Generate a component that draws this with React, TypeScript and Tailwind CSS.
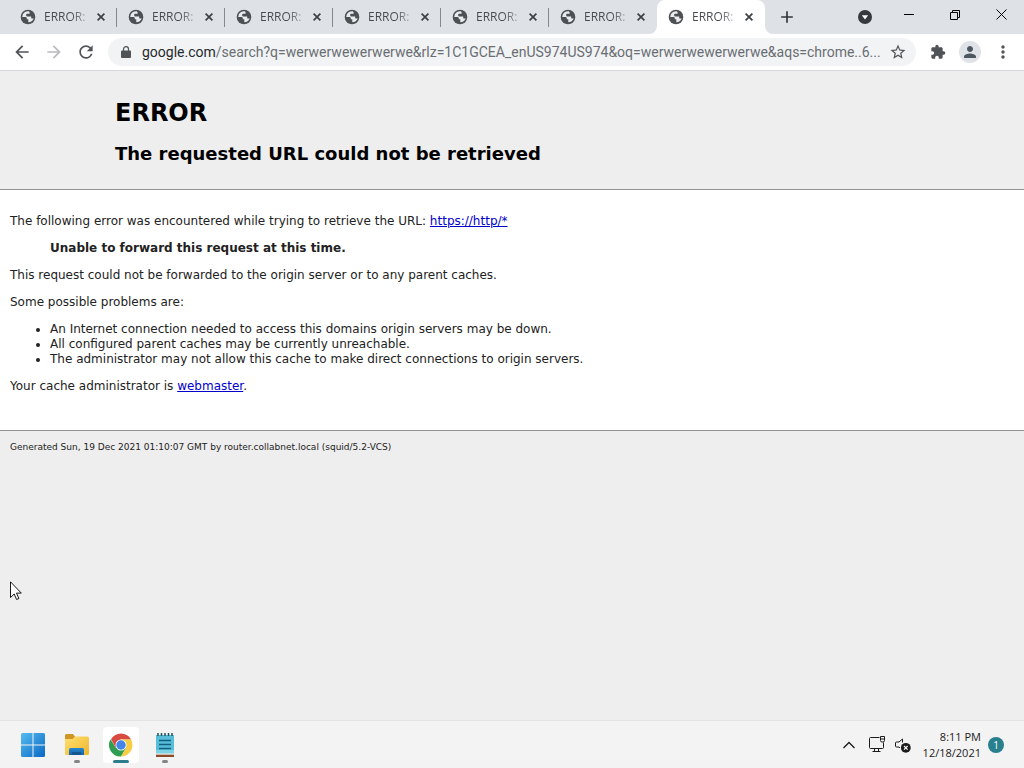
import React from 'react';
import {
  MdAdd,
  MdArrowBack,
  MdArrowForward,
  MdExtension,
  MdMoreVert,
  MdPerson,
  MdRefresh,
  MdStarBorder,
} from 'react-icons/md';

const tabs = [1, 2, 3, 4, 5, 6, 7];

function GlobeIcon() {
  return (
    <svg className="size-4 shrink-0" viewBox="0 0 16 16" aria-hidden="true">
      <circle cx="8" cy="8" r="7.300" fill="#4d5154" />
      <path
        d="M8.800 2.300C6.500 2 4 3.200 2.900 5.200L2.200 8h3.300c1 0 1.300.7 1.300 1.400v.9h1.500v2.900c2.500 0 4.600-1.500 5.400-3.800h-1.500c-.7 0-1-.4-1-1V7.600H7.600C6.700 7.600 6.100 7 6.100 6.100c0-.8.600-1.300 1.400-1.300h1.300c.6 0 1-.4 1-1z"
        fill="#e9ebee"
      />
    </svg>
  );
}

function Tab({ active }: { active: boolean }) {
  return (
    <div
      className={
        active
          ? 'relative flex h-full w-[108px] items-center rounded-t-lg bg-white pr-2 pl-[11px]'
          : 'relative flex h-full w-[108px] items-center pr-2 pl-[11px]'
      }
    >
      {active && (
        <>
          <svg className="absolute bottom-0 -left-2 size-2" viewBox="0 0 8 8" aria-hidden="true">
            <path d="M8 0v8H0a8 8 0 0 0 8-8z" fill="#fff" />
          </svg>
          <svg className="absolute -right-2 bottom-0 size-2" viewBox="0 0 8 8" aria-hidden="true">
            <path d="M0 0v8h8a8 8 0 0 1-8-8z" fill="#fff" />
          </svg>
        </>
      )}
      <GlobeIcon />
      <button className="ml-2 flex-1 bg-linear-to-r from-[#45494d] from-60% to-[#45494d]/20 bg-clip-text text-left text-xs whitespace-nowrap text-transparent">
        ERROR:
      </button>
      <button aria-label="Close tab" className="ml-1 flex size-4 shrink-0 items-center justify-center">
        <svg className="size-2" viewBox="0 0 8 8" stroke="#3c4043" strokeWidth="1.700">
          <path d="M.6.6l6.800 6.800M7.400.6L.6 7.400" />
        </svg>
      </button>
    </div>
  );
}

function TabStrip() {
  return (
    <div className="flex h-[34px] bg-[#dee1e6] pl-[9px]">
      {tabs.map((id, i) => (
        <div key={id} className="relative">
          <Tab active={i === tabs.length - 1} />
          {i < tabs.length - 2 && <span className="absolute top-2 right-0 h-[19px] w-px bg-[#85898e]" />}
        </div>
      ))}
      <button aria-label="New tab" className="ml-3 flex items-center text-[#34373b]">
        <MdAdd className="size-5" />
      </button>
      <div className="ml-auto flex">
        <button aria-label="Search tabs" className="flex w-11 items-center justify-center">
          <svg className="size-[14px]" viewBox="0 0 14 14">
            <circle cx="7" cy="7" r="7" fill="#36393e" />
            <path d="M3.800 5.200h6.400L7 9.600z" fill="#fff" />
          </svg>
        </button>
        <button aria-label="Minimize" className="flex h-[29px] w-11 items-center justify-center">
          <svg className="h-px w-[10px]" viewBox="0 0 10 1">
            <path d="M0 0h10v1H0z" />
          </svg>
        </button>
        <button aria-label="Restore" className="flex h-[29px] w-12 items-center justify-center">
          <svg className="size-[10px]" viewBox="0 0 10 10" fill="none" stroke="#000">
            <path d="M.5 2.500h7v7h-7zM2.500 2.500v-2h7v7h-2" />
          </svg>
        </button>
        <button aria-label="Close" className="flex h-[29px] w-[45px] items-center justify-center">
          <svg className="size-[11px]" viewBox="0 0 11 11" stroke="#000">
            <path d="M.5.5l10 10M10.500.5l-10 10" />
          </svg>
        </button>
      </div>
    </div>
  );
}

function Toolbar() {
  return (
    <div className="flex h-[37px] items-center border-b border-[#d5d7da] bg-white pr-[11px] pl-3 text-[#505357]">
      <button aria-label="Back" className="mr-3">
        <MdArrowBack className="size-5" />
      </button>
      <button aria-label="Forward" className="mr-3 text-[#b9bbbe]">
        <MdArrowForward className="size-5" />
      </button>
      <button aria-label="Reload" className="mr-3">
        <MdRefresh className="size-5" />
      </button>
      <div className="flex h-7 min-w-0 flex-1 items-center rounded-full bg-[#f1f3f4] pr-[9px] pl-[13px]">
        <svg className="h-3 w-[10px] shrink-0" viewBox="0 0 10 12" aria-hidden="true">
          <path d="M1 4.500h8a1 1 0 0 1 1 1V11a1 1 0 0 1-1 1H1a1 1 0 0 1-1-1V5.500a1 1 0 0 1 1-1z" fill="#505357" />
          <path d="M2.500 5V3.200a2.500 2.500 0 0 1 5 0V5" fill="none" stroke="#505357" strokeWidth="1.200" />
        </svg>
        <button className="ml-[11px] min-w-0 flex-1 overflow-hidden text-left font-[Roboto,sans-serif] text-sm whitespace-nowrap text-[#6a6e73]">
          <span className="text-[#27292c]">google.com</span>
          /search?q=werwerwewerwerwe&amp;rlz=1C1GCEA_enUS974US974&amp;oq=werwerwewerwerwe&amp;aqs=chrome..6...
        </button>
        <button aria-label="Bookmark this page" className="ml-2">
          <MdStarBorder className="size-[18px]" />
        </button>
      </div>
      <button aria-label="Extensions" className="ml-[14px]">
        <MdExtension className="size-4" />
      </button>
      <button
        aria-label="Profile"
        className="ml-[13px] flex size-[22px] items-center justify-center rounded-full bg-[#dfe3e8] text-[#4d5762]"
      >
        <MdPerson className="size-[18px]" />
      </button>
      <button aria-label="Menu" className="ml-3">
        <MdMoreVert className="size-5" />
      </button>
    </div>
  );
}

function ErrorPage() {
  return (
    <main className="flex-1 bg-[#eeeeee] font-['DejaVu_Sans',sans-serif] text-xs leading-[15px] text-[#222]">
      <header className="pt-[25px] pb-[23px] pl-[115px] font-bold text-black">
        <h1 className="text-2xl leading-[34px]">ERROR</h1>
        <h2 className="mt-3 text-lg leading-6">The requested URL could not be retrieved</h2>
      </header>
      <section className="flex flex-col gap-3 border-y border-[#929292] bg-white px-[10px] pt-6 pb-9">
        <p>
          The following error was encountered while trying to retrieve the URL:{' '}
          <a href="https://http/*" className="text-[#0000cc] underline">
            https://http/*
          </a>
        </p>
        <blockquote className="px-10 font-bold">Unable to forward this request at this time.</blockquote>
        <p>This request could not be forwarded to the origin server or to any parent caches.</p>
        <p>Some possible problems are:</p>
        <ul className="list-disc pl-10">
          <li>An Internet connection needed to access this domains origin servers may be down.</li>
          <li>All configured parent caches may be currently unreachable.</li>
          <li>The administrator may not allow this cache to make direct connections to origin servers.</li>
        </ul>
        <p>
          Your cache administrator is{' '}
          <a href="mailto:webmaster" className="text-[#0000cc] underline">
            webmaster
          </a>
          .
        </p>
      </section>
      <footer className="px-[10px] pt-[9px] text-[9px]">
        Generated Sun, 19 Dec 2021 01:10:07 GMT by router.collabnet.local (squid/5.2-VCS)
      </footer>
    </main>
  );
}

function StartIcon() {
  return (
    <svg className="size-6" viewBox="0 0 24 24">
      <defs>
        <linearGradient id="start" x1="0" y1="0" x2="24" y2="24" gradientUnits="userSpaceOnUse">
          <stop offset="0" stopColor="#55bdf0" />
          <stop offset="1" stopColor="#0a67c4" />
        </linearGradient>
      </defs>
      <path
        d="M1.500 0h10v11.500H0v-10A1.500 1.500 0 0 1 1.500 0zM12.500 0h10A1.500 1.500 0 0 1 24 1.500v10H12.500zM0 12.500h11.500V24h-10A1.500 1.500 0 0 1 0 22.500zM12.500 12.500H24v10a1.500 1.500 0 0 1-1.500 1.500h-10z"
        fill="url(#start)"
      />
    </svg>
  );
}

function FolderIcon() {
  return (
    <svg className="size-6" viewBox="0 0 24 24">
      <defs>
        <linearGradient id="folder" x1="0" y1="0" x2="1" y2="1">
          <stop offset="0" stopColor="#ffdf70" />
          <stop offset="1" stopColor="#efb62b" />
        </linearGradient>
        <linearGradient id="tray" x1="0" y1="0" x2="0" y2="1">
          <stop offset="0" stopColor="#2587cc" />
          <stop offset="1" stopColor="#1765a8" />
        </linearGradient>
      </defs>
      <path d="M0 2.500A1.500 1.500 0 0 1 1.500 1H8l2 2.500V8H0z" fill="#cf9626" />
      <path d="M0 6h7.500l2.500-2.500h12.500A1.500 1.500 0 0 1 24 5v15.500A1.500 1.500 0 0 1 22.500 22h-21A1.500 1.500 0 0 1 0 20.500z" fill="url(#folder)" />
      <path d="M4 22v-5.500A1.500 1.500 0 0 1 5.500 15h12A1.500 1.500 0 0 1 19 16.500V22z" fill="url(#tray)" />
      <path d="M7 19h9v3H7z" fill="#15578f" />
    </svg>
  );
}

function ChromeIcon() {
  return (
    <svg className="size-6" viewBox="0 0 48 48">
      <path d="M3.200 12.500A23 23 0 0 0 24 47l10-17.250L24 24l-10 5.750z" fill="#2f9e52" />
      <path d="M24 12.500h19.900A23 23 0 0 1 24 47l10-17.250z" fill="#f9cc45" />
      <path d="M4.100 12.500L14 29.750 24 12.500h19.900A23 23 0 0 0 4.100 12.500z" fill="#d84b41" />
      <circle cx="24" cy="24" r="11" fill="#fff" />
      <circle cx="24" cy="24" r="9.500" fill="#4385e8" />
    </svg>
  );
}

function NotepadIcon() {
  return (
    <svg className="h-6 w-5" viewBox="0 0 20 24">
      <path d="M1 2h18v19H1z" fill="#57bdd8" />
      <path d="M1 17h18v4H1z" fill="#7dd2e4" />
      <path d="M1 21h18v3H1z" fill="#8a4b27" />
      <path d="M1 20.500h18v1.200H1z" fill="#f2eee9" />
      <path d="M4 7.500h12M4 11.500h12M4 15.500h12" stroke="#135f80" strokeWidth="1.500" />
      <path d="M3 0v3M6.500 0v3M10 0v3M13.500 0v3M17 0v3" stroke="#27505e" strokeWidth="1.500" />
    </svg>
  );
}

function TaskButton({
  label,
  state,
  children,
}: {
  label: string;
  state?: 'open' | 'active';
  children: React.ReactNode;
}) {
  return (
    <button
      aria-label={label}
      className={
        state === 'active'
          ? 'relative flex h-9 w-9 items-center justify-center rounded bg-white'
          : 'relative flex h-9 w-9 items-center justify-center'
      }
    >
      {children}
      {state === 'active' && <span className="absolute bottom-0 h-[3px] w-4 rounded-full bg-[#2b7e8c]" />}
      {state === 'open' && <span className="absolute bottom-0 h-[3px] w-[6px] rounded-full bg-[#858585]" />}
    </button>
  );
}

function Taskbar() {
  return (
    <div className="flex h-12 items-center border-t border-[#e3e3e3] bg-[#f3f3f3] pr-5 pl-[15px] text-[#1b1b1b]">
      <div className="flex gap-2">
        <TaskButton label="Start">
          <StartIcon />
        </TaskButton>
        <TaskButton label="File Explorer" state="open">
          <FolderIcon />
        </TaskButton>
        <TaskButton label="Google Chrome" state="active">
          <ChromeIcon />
        </TaskButton>
        <TaskButton label="Notepad" state="open">
          <NotepadIcon />
        </TaskButton>
      </div>
      <div className="ml-auto flex items-center">
        <button aria-label="Show hidden icons" className="mr-[14px]">
          <svg className="h-2 w-3" viewBox="0 0 12 8" fill="none" stroke="#1b1b1b" strokeWidth="1.300">
            <path d="M.5 7L6 1.500 11.500 7" />
          </svg>
        </button>
        <button aria-label="Network" className="mr-[9px]">
          <svg className="size-[17px]" viewBox="0 0 17 17" fill="none" stroke="#1b1b1b">
            <path d="M10.500 1.500h-9a1 1 0 0 0-1 1v9a1 1 0 0 0 1 1h12a1 1 0 0 0 1-1V6.500M3.500 15.500h8M5.500 12.500v3M9.500 12.500v3" />
            <path d="M11.500.5h4v4a1.500 1.500 0 0 1-1.500 1.500h-1a1.500 1.500 0 0 1-1.500-1.500zM11.500 3h4" />
          </svg>
        </button>
        <button aria-label="Volume" className="mr-3">
          <svg className="h-4 w-4" viewBox="0 0 16 16" fill="none" stroke="#1b1b1b">
            <path d="M7.500 5.500V2L4 5H1.500a1 1 0 0 0-1 1v3a1 1 0 0 0 1 1H4l1 1" />
            <circle cx="10.800" cy="10.800" r="4.900" fill="#1b1b1b" stroke="none" />
            <path d="M9 9l3.600 3.600M12.600 9L9 12.600" stroke="#fff" strokeWidth="1.200" />
          </svg>
        </button>
        <button className="mr-[7px] text-right text-[11px] leading-4">
          <span className="block">8:11 PM</span>
          <span className="block">12/18/2021</span>
        </button>
        <button
          aria-label="1 new notification"
          className="flex size-4 items-center justify-center rounded-full bg-[#28808e] text-[10px] leading-4 text-white"
        >
          1
        </button>
      </div>
    </div>
  );
}

export default function App() {
  return (
    <div className="relative flex min-h-screen flex-col font-['Open_Sans','Noto_Sans',sans-serif]">
      <TabStrip />
      <Toolbar />
      <ErrorPage />
      <Taskbar />
      <svg className="pointer-events-none absolute top-[581px] left-[10px] h-5 w-3" viewBox="0 0 12 20" aria-hidden="true">
        <path d="M.5.8v15.700l3.700-3.500 2.400 5.500 2.300-1-2.400-5.400h4.800z" fill="#fff" stroke="#000" strokeWidth=".9" />
      </svg>
    </div>
  );
}
